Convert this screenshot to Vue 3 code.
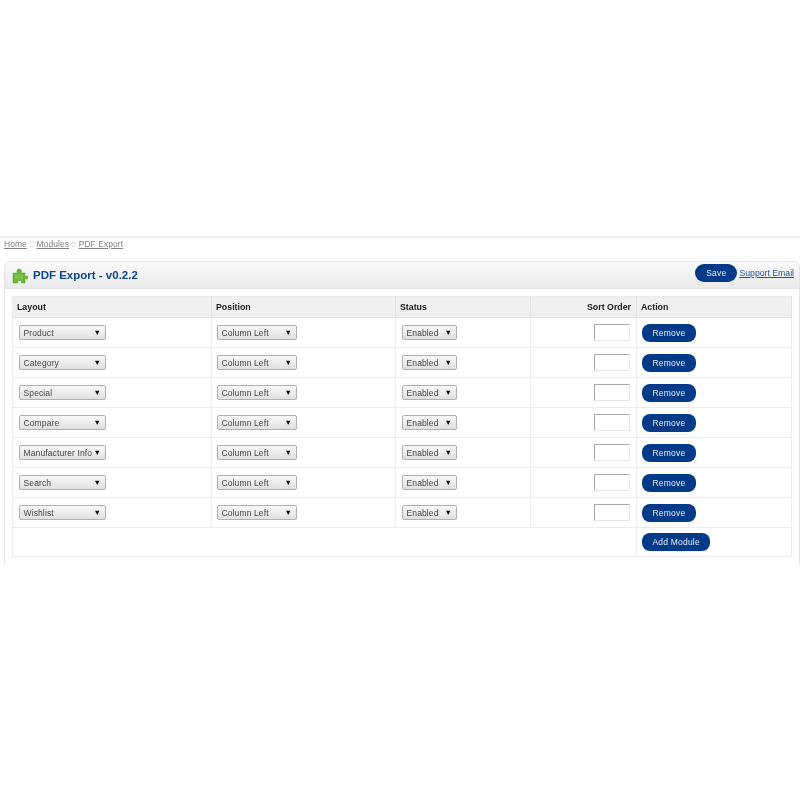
<script setup>
const rows = ['Product', 'Category', 'Special', 'Compare', 'Manufacturer Info', 'Search', 'Wishlist']
</script>

<template>
  <div class="page">
    <div class="topbar"></div>
    <div class="breadcrumb">
      <a>Home</a><span class="sep"> :: </span><a>Modules</a><span class="sep"> :: </span><a>PDF Export</a>
    </div>
    <section class="box">
      <header class="heading">
        <h1>
          <svg class="icon" width="16" height="16" viewBox="0 0 16 16">
            <path d="M1 5h4.200c.2 0 .2-.3 0-.6C4.600 3.500 4.800 1 7.200 1s2.700 2.500 2 3.400c-.2.300-.2.600 0 .6H13v3.200c0 .2.300.2.600 0 .8-.5 2.400-.3 2.400 1.300s-1.600 1.900-2.400 1.300c-.3-.2-.6-.2-.6 0V15H9.500c-.2 0-.2-.3 0-.6.500-.8.200-2-1.800-2s-2.300 1.200-1.800 2c.2.300.2.600 0 .6H1z" fill="#6db43b" stroke="#5aa02f" stroke-width=".5"/>
            <path d="M3 6.500h8v5H3z" fill="#8fcb5c" opacity=".6"/>
          </svg>
          PDF Export - v0.2.2
        </h1>
        <div class="actions">
          <a class="btn save">Save</a>
          <a class="support">Support Email</a>
        </div>
      </header>
      <div class="content">
        <table>
          <colgroup>
            <col class="c1" /><col class="c2" /><col class="c3" /><col class="c4" /><col class="c5" />
          </colgroup>
          <thead>
            <tr>
              <th>Layout</th>
              <th>Position</th>
              <th>Status</th>
              <th class="right">Sort Order</th>
              <th>Action</th>
            </tr>
          </thead>
          <tbody>
            <tr v-for="name in rows" :key="name">
              <td class="first"><div class="select s-layout"><span>{{ name }}</span><i>▼</i></div></td>
              <td class="first"><div class="select s-pos"><span>Column Left</span><i>▼</i></div></td>
              <td><div class="select s-status"><span>Enabled</span><i>▼</i></div></td>
              <td class="right"><input class="sort" type="text" /></td>
              <td class="act"><a class="btn">Remove</a></td>
            </tr>
          </tbody>
          <tfoot>
            <tr>
              <td colspan="4"></td>
              <td class="act"><a class="btn">Add Module</a></td>
            </tr>
          </tfoot>
        </table>
      </div>
    </section>
  </div>
</template>

<style>
html, body { margin: 0; background: #fff; }
</style>

<style scoped>
.page {
  width: 800px;
  height: 800px;
  overflow: hidden;
  font-family: "Liberation Sans", Arial, sans-serif;
  font-size: 8.8px;
  color: #333;
  padding-top: 236px;
  box-sizing: border-box;
  filter: blur(.3px);
}
.topbar {
  height: 2px;
  background: #f0f0f0;
}
.breadcrumb {
  height: 23px;
  padding: 1px 0 0 4px;
  box-sizing: border-box;
  color: #808080;
  font-size: 8.5px;
  line-height: 10px;
  letter-spacing: .05px;
}
.breadcrumb a { text-decoration: underline; }
.sep { color: #bbb; }
.box {
  margin-left: 4px;
  width: 796px;
  border: 1px solid #e4e4e4;
  border-bottom: 0;
  border-radius: 6px 6px 0 0;
  height: 304px;
  box-sizing: border-box;
}
.heading {
  height: 27px;
  display: flex;
  align-items: center;
  justify-content: space-between;
  box-sizing: border-box;
  padding: 0 5px 0 7px;
  background: linear-gradient(#fafafa, #e9e9e9);
  border-bottom: 1px solid #e4e4e4;
  border-radius: 5px 5px 0 0;
}
h1 {
  margin: 0;
  display: flex;
  align-items: center;
  gap: 5px;
  font-size: 11.5px;
  font-weight: bold;
  color: #0a4593;
}
.icon { margin-top: 2px; }
.actions {
  display: flex;
  align-items: center;
  gap: 2px;
  margin-top: -4px;
}
.btn {
  display: inline-block;
  height: 18px;
  line-height: 18px;
  padding: 0 10.5px;
  border-radius: 8px;
  background: #003a88;
  color: #e8edf5;
  font-size: 8.5px;
  letter-spacing: .2px;
}
.save { padding: 0 11px; border-radius: 9px; }
.support {
  color: #1e5596;
  font-size: 8.7px;
  text-decoration: underline;
}
.content {
  padding: 7px 0 0 7px;
}
table {
  width: 779px;
  border-collapse: collapse;
  table-layout: fixed;
  border: 1px solid #ececec;
}
.c1 { width: 199px; }
.c2 { width: 184px; }
.c3 { width: 135px; }
.c4 { width: 106px; }
.c5 { width: 155px; }
th, td {
  padding: 0;
  border-right: 1px solid #ececec;
  border-bottom: 1px solid #ececec;
}
th {
  height: 19px;
  padding: 0 5px 1px 4px;
  background: #efefef;
  color: #222;
  font-weight: bold;
  text-align: left;
  border-right-color: #e2e2e2;
  border-bottom-color: #e2e2e2;
}
th.right { text-align: right; }
td { height: 29px; padding-left: 6px; }
td.right { text-align: right; padding-right: 6px; }
td.act { padding-left: 5px; }
tfoot td { height: 28px; border-bottom: 0; }
.select {
  display: flex;
  align-items: center;
  justify-content: space-between;
  height: 15px;
  box-sizing: border-box;
  padding: 0 4px 0 3.5px;
  border: 1px solid #b0b0b0;
  border-radius: 2px;
  background: linear-gradient(#f8f8f8, #e0e0e0);
  color: #444;
  font-size: 8.5px;
  letter-spacing: .12px;
  white-space: nowrap;
}
.select i { font-style: normal; font-size: 7.5px; color: #111; line-height: 10px; }
.s-layout { width: 87px; }
.s-pos { width: 80px; margin-left: -1px; }
.s-status { width: 55px; }
.sort {
  display: block;
  margin-left: auto;
  width: 36px;
  height: 17px;
  box-sizing: border-box;
  padding: 0;
  border: 1px solid #e8e8e8;
  border-top-color: #aaa;
  border-left-color: #aaa;
  background: #fff;
}
</style>
